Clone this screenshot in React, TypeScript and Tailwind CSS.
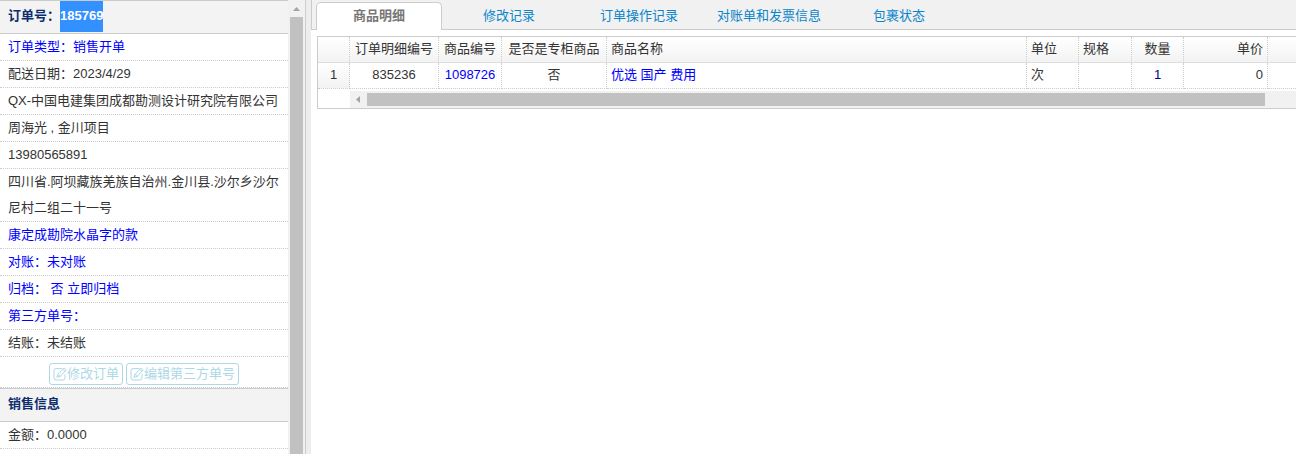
import type { ReactNode } from 'react';

type OrderLine = {
  text: string;
  link?: boolean;
};

const orderLines: OrderLine[] = [
  { text: '订单类型：销售开单', link: true },
  { text: '配送日期：2023/4/29' },
  { text: 'QX-中国电建集团成都勘测设计研究院有限公司' },
  { text: '周海光 , 金川项目' },
  { text: '13980565891' },
  { text: '四川省.阿坝藏族羌族自治州.金川县.沙尔乡沙尔尼村二组二十一号' },
  { text: '康定成勘院水晶字的款', link: true },
  { text: '对账：未对账', link: true },
  { text: '归档： 否 立即归档', link: true },
  { text: '第三方单号：', link: true },
  { text: '结账：未结账' },
];

const tabs = ['商品明细', '修改记录', '订单操作记录', '对账单和发票信息', '包裹状态'];

const columns = [
  { title: '', width: 'w-8', align: 'text-center' },
  { title: '订单明细编号', width: 'w-[89px]', align: 'text-center' },
  { title: '商品编号', width: 'w-[63px]', align: 'text-center' },
  { title: '是否是专柜商品', width: 'w-[105px]', align: 'text-center' },
  { title: '商品名称', width: 'w-[420px]', align: 'text-left' },
  { title: '单位', width: 'w-[52px]', align: 'text-left' },
  { title: '规格', width: 'w-[53px]', align: 'text-left' },
  { title: '数量', width: 'w-[52px]', align: 'text-center' },
  { title: '单价', width: 'w-[84px]', align: 'text-right' },
];

const cell = 'h-[26px] px-1 pt-0 pb-0.5 whitespace-nowrap border-dotted border-[#ccc] border-r leading-none';

function SectionTitle({ children }: { children: ReactNode }) {
  return (
    <h2 className="h-[34px] border-y border-[#ccc] bg-[#f3f3f3] px-2 font-bold leading-[30px] text-[#0e2d6f]">
      {children}
    </h2>
  );
}

function EditIcon() {
  return (
    <svg
      className="size-3.5 shrink-0"
      viewBox="0 0 14 14"
      fill="none"
      stroke="currentColor"
      strokeLinecap="round"
      strokeLinejoin="round"
      aria-hidden="true"
    >
      <path d="M8.6 1.6H3A2 2 0 0 0 1 3.6V11A2 2 0 0 0 3 13H10A2 2 0 0 0 12 11V7.6" />
      <path d="M5 7.4 11 .9 13.2 2.9 7.3 9.4 4.3 10.2Z" />
      <path d="M5 7.4 7.3 9.4M9.8 2.4 11.9 4.3" />
    </svg>
  );
}

function EditButton({ label }: { label: string }) {
  return (
    <button
      type="button"
      className="flex h-[22px] items-center rounded-[3px] border border-[#add8e6] px-[3px] leading-5 text-[#add8e6]"
    >
      <EditIcon />
      {label}
    </button>
  );
}

function OrderPanel() {
  return (
    <aside className="flex w-[306px] shrink-0 border-r border-[#ccc]">
      <div className="min-w-0 flex-1">
        <SectionTitle>
          订单号：<span className="inline-block h-[31px] bg-[#3390ff] text-white">185769</span>
        </SectionTitle>
        <ul>
          {orderLines.map((line) => (
            <li key={line.text} className="border-b border-dotted border-[#ccc] px-2 leading-[26px]">
              {line.link ? (
                <a href="#" className="text-[#00f]">{line.text}</a>
              ) : (
                line.text
              )}
            </li>
          ))}
        </ul>
        <div className="flex justify-center gap-[3px] border-b border-dotted border-[#ccc] pt-1.5 pb-0.5">
          <EditButton label="修改订单" />
          <EditButton label="编辑第三方单号" />
        </div>
        <SectionTitle>销售信息</SectionTitle>
        <p className="border-b border-dotted border-[#ccc] px-2 leading-[26px]">金额：0.0000</p>
      </div>
      <div className="flex w-[17px] flex-col items-center bg-[#f1f1f1]">
        <svg className="h-[17px] w-[7px] shrink-0" viewBox="0 0 7 17">
          <path d="M0 11 3.5 7 7 11Z" fill="#a3a3a3" />
        </svg>
        <div className="w-[13px] flex-1 bg-[#c1c1c1]" />
      </div>
    </aside>
  );
}

function ProductTable() {
  return (
    <div className="ml-1.5 mt-1.5 border border-r-0 border-[#ccc]">
      <table className="w-full table-fixed border-separate border-spacing-0">
        <thead>
          <tr className="bg-linear-to-b from-white to-[#f2f2f2]">
            {columns.map((col) => (
              <th
                key={col.title}
                className={`${cell} ${col.width} ${col.align} border-b font-normal [border-bottom-color:#ddd] [border-bottom-style:solid]`}
              >
                {col.title}
              </th>
            ))}
            <th className="border-b border-[#ddd]" />
          </tr>
        </thead>
        <tbody>
          <tr className="*:border-b">
            <td className={`${cell} bg-linear-to-b from-white to-[#f2f2f2] text-center`}>1</td>
            <td className={`${cell} text-center`}>835236</td>
            <td className={`${cell} text-center`}>
              <a href="#" className="text-[#00f]">1098726</a>
            </td>
            <td className={`${cell} text-center`}>否</td>
            <td className={cell}>
              <a href="#" className="text-[#00f]">优选 国产 费用</a>
            </td>
            <td className={cell}>次</td>
            <td className={cell} />
            <td className={`${cell} text-center text-[#000080]`}>1</td>
            <td className={`${cell} text-right`}>0</td>
            <td className="border-dotted border-[#ccc]" />
          </tr>
        </tbody>
      </table>
      <div className="ml-8 mt-0.5 flex h-[17px] items-center bg-[#f1f1f1] pr-[31px]">
        <svg className="h-[7px] w-[17px] shrink-0" viewBox="0 0 17 7">
          <path d="M10 0 6 3.5 10 7Z" fill="#a3a3a3" />
        </svg>
        <div className="h-[13px] flex-1 bg-[#c1c1c1]" />
      </div>
    </div>
  );
}

export default function App() {
  return (
    <div className="flex h-screen overflow-hidden bg-white font-['Liberation_Sans','Noto_Sans_CJK_SC',sans-serif] text-[13px] text-[#333]">
      <OrderPanel />
      <div className="w-[5px] shrink-0 bg-[#ededed]" />
      <main className="min-w-0 flex-1">
        <nav className="flex h-[30px] gap-1 border-b border-l border-[#ccc] bg-[#f1f1f1] pl-1 pt-0.5">
          {tabs.map((tab, i) => (
            <a
              key={tab}
              href="#"
              className={
                i === 0
                  ? 'h-7 w-[126px] rounded-t-[5px] border border-b-0 border-[#ccc] bg-white text-center font-bold leading-[26px] text-[#777]'
                  : 'h-7 w-[126px] text-center leading-7 text-[#0b85c9]'
              }
            >
              {tab}
            </a>
          ))}
        </nav>
        <ProductTable />
      </main>
    </div>
  );
}
